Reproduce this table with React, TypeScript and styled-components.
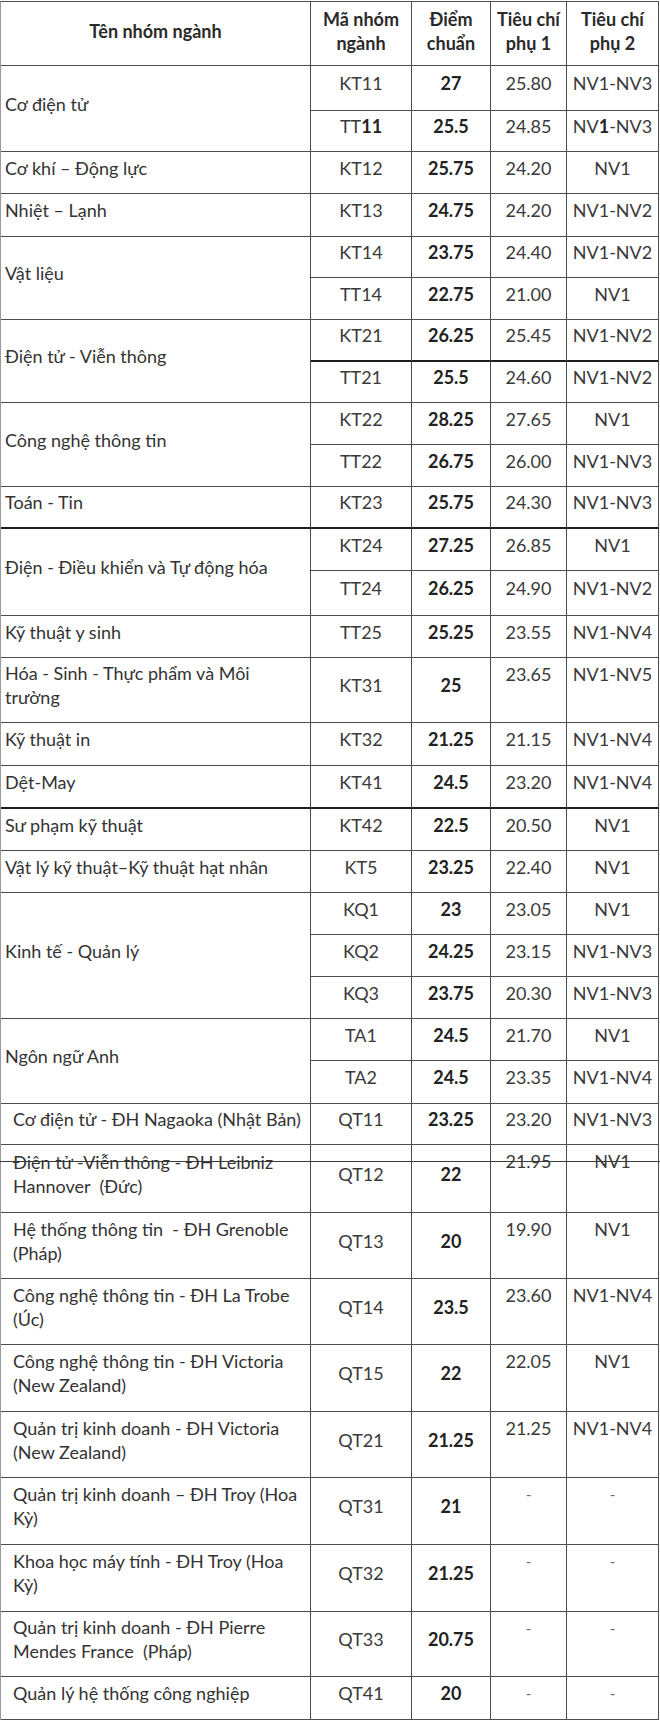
import React, { Fragment, ReactNode } from "react";
import styled, { createGlobalStyle } from "styled-components";

const GlobalStyle = createGlobalStyle`
  html, body {
    margin: 0;
    padding: 0;
    background: #ffffff;
  }
  body {
    font-family: Lato, "Noto Sans", "Liberation Sans", sans-serif;
    color: #333333;
  }
`;

const LINE = "#4d4d4d";
const HEAVY = "#1e1e1e";

const Page = styled.div`
  position: relative;
  width: 660px;
  height: 1724px;
  padding-top: 1px;
  box-sizing: border-box;
  background: #ffffff;
`;

const Grid = styled.div<{ $rows: string }>`
  display: grid;
  grid-template-columns: 310px 101px 79px 76px 92px;
  grid-template-rows: ${({ $rows }) => $rows};
  width: max-content;
  border-top: 1px solid ${LINE};
  border-left: 1px solid #9a9a9a;
  font-size: 18px;
  line-height: 24px;
`;

const HeadCell = styled.div`
  display: flex;
  align-items: center;
  justify-content: center;
  text-align: center;
  padding-bottom: 6px;
  box-sizing: border-box;
  border-right: 1px solid ${LINE};
  border-bottom: 1px solid ${LINE};
  font-weight: 700;
  color: #2a2a2a;
  white-space: pre;
`;

const NameCell = styled.div<{ $span: number; $inset: number; $thick?: boolean }>`
  grid-row: span ${({ $span }) => $span};
  display: flex;
  align-items: center;
  padding: 0 2px 10px ${({ $inset }) => $inset}px;
  box-sizing: border-box;
  border-right: 1px solid ${LINE};
  border-bottom: ${({ $thick }) => ($thick ? `2px solid ${HEAVY}` : `1px solid ${LINE}`)};
  white-space: pre;
  color: #333333;
`;

const ValueCell = styled.div<{ $top?: boolean; $bold?: boolean; $thick?: boolean; $heavy?: boolean }>`
  display: flex;
  justify-content: center;
  align-items: ${({ $top }) => ($top ? "flex-start" : "center")};
  padding: ${({ $top }) => ($top ? "4px 0 0" : "0 0 10px")};
  box-sizing: border-box;
  border-right: 1px solid ${LINE};
  border-bottom: ${({ $thick, $heavy }) =>
    $thick || $heavy ? `2px solid ${HEAVY}` : `1px solid ${LINE}`};
  font-weight: ${({ $bold }) => ($bold ? 700 : 400)};
  color: ${({ $bold }) => ($bold ? "#222222" : "#3a3a3a")};
  white-space: nowrap;
`;

const Dash = styled.span`
  color: #6a6a6a;
  font-size: 15px;
`;

const Strong = styled.b`
  font-weight: 700;
  color: #222222;
`;

// a stray scan line that runs through the QT12 row
const StrayLine = styled.div`
  position: absolute;
  left: 0;
  top: 1161px;
  width: 660px;
  height: 1px;
  background: #3a3a3a;
`;

type Row = {
  code: ReactNode;
  score: string;
  sub1: ReactNode;
  sub2: ReactNode;
  h: number;
  top?: boolean;
  heavy?: boolean;
};

type Group = {
  name: string[];
  rows: Row[];
  inset?: number;
  thick?: boolean;
};

const r = (
  code: ReactNode,
  score: string,
  sub1: ReactNode,
  sub2: ReactNode,
  h: number,
  extra: Partial<Row> = {},
): Row => ({ code, score, sub1, sub2, h, ...extra });

const dash = <Dash>-</Dash>;

const groups: Group[] = [
  {
    name: ["Cơ điện tử"],
    rows: [
      r("KT11", "27", "25.80", "NV1-NV3", 45),
      r(<>TT<Strong>11</Strong></>, "25.5", "24.85", <>NV<Strong>1</Strong>-NV3</>, 41),
    ],
  },
  { name: ["Cơ khí – Động lực"], rows: [r("KT12", "25.75", "24.20", "NV1", 42)] },
  { name: ["Nhiệt – Lạnh"], rows: [r("KT13", "24.75", "24.20", "NV1-NV2", 43)] },
  {
    name: ["Vật liệu"],
    rows: [r("KT14", "23.75", "24.40", "NV1-NV2", 41), r("TT14", "22.75", "21.00", "NV1", 42)],
  },
  {
    name: ["Điện tử - Viễn thông"],
    rows: [
      r("KT21", "26.25", "25.45", "NV1-NV2", 42, { heavy: true }),
      r("TT21", "25.5", "24.60", "NV1-NV2", 41),
    ],
  },
  {
    name: ["Công nghệ thông tin"],
    rows: [r("KT22", "28.25", "27.65", "NV1", 42), r("TT22", "26.75", "26.00", "NV1-NV3", 42)],
  },
  { name: ["Toán - Tin"], rows: [r("KT23", "25.75", "24.30", "NV1-NV3", 42)], thick: true },
  {
    name: ["Điện - Điều khiển và Tự động hóa"],
    rows: [r("KT24", "27.25", "26.85", "NV1", 42), r("TT24", "26.25", "24.90", "NV1-NV2", 45)],
  },
  { name: ["Kỹ thuật y sinh"], rows: [r("TT25", "25.25", "23.55", "NV1-NV4", 42)] },
  {
    name: ["Hóa - Sinh - Thực phẩm và Môi", "trường"],
    rows: [r("KT31", "25", "23.65", "NV1-NV5", 65, { top: true })],
  },
  { name: ["Kỹ thuật in"], rows: [r("KT32", "21.25", "21.15", "NV1-NV4", 43)] },
  { name: ["Dệt-May"], rows: [r("KT41", "24.5", "23.20", "NV1-NV4", 43)], thick: true },
  { name: ["Sư phạm kỹ thuật"], rows: [r("KT42", "22.5", "20.50", "NV1", 42)] },
  { name: ["Vật lý kỹ thuật–Kỹ thuật hạt nhân"], rows: [r("KT5", "23.25", "22.40", "NV1", 42)] },
  {
    name: ["Kinh tế - Quản lý"],
    rows: [
      r("KQ1", "23", "23.05", "NV1", 42),
      r("KQ2", "24.25", "23.15", "NV1-NV3", 42),
      r("KQ3", "23.75", "20.30", "NV1-NV3", 42),
    ],
  },
  {
    name: ["Ngôn ngữ Anh"],
    rows: [r("TA1", "24.5", "21.70", "NV1", 42), r("TA2", "24.5", "23.35", "NV1-NV4", 43)],
  },
  {
    name: ["Cơ điện tử - ĐH Nagaoka (Nhật Bản)"],
    rows: [r("QT11", "23.25", "23.20", "NV1-NV3", 41)],
    inset: 12,
  },
  {
    name: ["Điện tử -Viễn thông - ĐH Leibniz", "Hannover  (Đức)"],
    rows: [r("QT12", "22", "21.95", "NV1", 68, { top: true })],
    inset: 12,
  },
  {
    name: ["Hệ thống thông tin  - ĐH Grenoble", "(Pháp)"],
    rows: [r("QT13", "20", "19.90", "NV1", 66, { top: true })],
    inset: 12,
  },
  {
    name: ["Công nghệ thông tin - ĐH La Trobe", "(Úc)"],
    rows: [r("QT14", "23.5", "23.60", "NV1-NV4", 66, { top: true })],
    inset: 12,
  },
  {
    name: ["Công nghệ thông tin - ĐH Victoria", "(New Zealand)"],
    rows: [r("QT15", "22", "22.05", "NV1", 67, { top: true })],
    inset: 12,
  },
  {
    name: ["Quản trị kinh doanh - ĐH Victoria", "(New Zealand)"],
    rows: [r("QT21", "21.25", "21.25", "NV1-NV4", 66, { top: true })],
    inset: 12,
  },
  {
    name: ["Quản trị kinh doanh – ĐH Troy (Hoa", "Kỳ)"],
    rows: [r("QT31", "21", dash, dash, 67, { top: true })],
    inset: 12,
  },
  {
    name: ["Khoa học máy tính - ĐH Troy (Hoa", "Kỳ)"],
    rows: [r("QT32", "21.25", dash, dash, 67, { top: true })],
    inset: 12,
  },
  {
    name: ["Quản trị kinh doanh - ĐH Pierre", "Mendes France  (Pháp)"],
    rows: [r("QT33", "20.75", dash, dash, 65, { top: true })],
    inset: 12,
  },
  {
    name: ["Quản lý hệ thống công nghiệp"],
    rows: [r("QT41", "20", dash, dash, 43)],
    inset: 12,
  },
];

const headers = ["Tên nhóm ngành", "Mã nhóm\nngành", "Điểm\nchuẩn", "Tiêu chí\nphụ 1", "Tiêu chí\nphụ 2"];

export default function App() {
  const rowTemplate = ["64px", ...groups.flatMap((g) => g.rows.map((row) => `${row.h}px`))].join(" ");

  return (
    <Page>
      <GlobalStyle />
      <Grid $rows={rowTemplate}>
        {headers.map((h) => (
          <HeadCell key={h}>{h}</HeadCell>
        ))}
        {groups.map((g, gi) => (
          <Fragment key={gi}>
            {g.rows.map((row, ri) => {
              const last = ri === g.rows.length - 1;
              const thick = g.thick && last;
              return (
                <Fragment key={ri}>
                  {ri === 0 && (
                    <NameCell $span={g.rows.length} $inset={g.inset ?? 4} $thick={g.thick}>
                      <span>
                        {g.name.map((line, li) => (
                          <Fragment key={li}>
                            {li > 0 && <br />}
                            {line}
                          </Fragment>
                        ))}
                      </span>
                    </NameCell>
                  )}
                  <ValueCell $thick={thick} $heavy={row.heavy}>
                    {row.code}
                  </ValueCell>
                  <ValueCell $bold $thick={thick} $heavy={row.heavy}>
                    {row.score}
                  </ValueCell>
                  <ValueCell $top={row.top} $thick={thick} $heavy={row.heavy}>
                    {row.sub1}
                  </ValueCell>
                  <ValueCell $top={row.top} $thick={thick} $heavy={row.heavy}>
                    {row.sub2}
                  </ValueCell>
                </Fragment>
              );
            })}
          </Fragment>
        ))}
      </Grid>
      <StrayLine />
    </Page>
  );
}
